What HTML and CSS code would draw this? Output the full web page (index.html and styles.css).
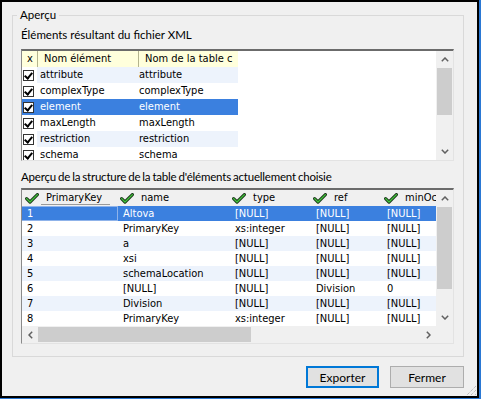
FILE: index.html
```html
<!DOCTYPE html>
<html lang="fr">
<head>
<meta charset="utf-8">
<title>Aperçu</title>
<link rel="stylesheet" href="styles.css">
</head>
<body>
<div class="win">
  <div class="group">
    <span class="group-title">Aperçu</span>
    <div class="label">Éléments résultant du fichier XML</div>
    <div class="listbox">
      <div class="lb-content">
        <div class="lb-row lb-header">
          <div class="c-x">x</div>
          <div class="c-name">Nom élément</div>
          <div class="c-table">Nom de la table c</div>
        </div>
        <div class="lb-row alt"><div class="c-x"><span class="cb"></span></div><div class="c-name">attribute</div><div class="c-table">attribute</div></div>
        <div class="lb-row"><div class="c-x"><span class="cb"></span></div><div class="c-name">complexType</div><div class="c-table">complexType</div></div>
        <div class="lb-row sel"><div class="c-x"><span class="cb"></span></div><div class="c-name">element</div><div class="c-table">element</div></div>
        <div class="lb-row"><div class="c-x"><span class="cb"></span></div><div class="c-name">maxLength</div><div class="c-table">maxLength</div></div>
        <div class="lb-row alt"><div class="c-x"><span class="cb"></span></div><div class="c-name">restriction</div><div class="c-table">restriction</div></div>
        <div class="lb-row"><div class="c-x"><span class="cb"></span></div><div class="c-name">schema</div><div class="c-table">schema</div></div>
      </div>
      <div class="vscroll lb-vscroll">
        <div class="sb-btn"><svg width="8" height="5" viewBox="0 0 8 5"><path d="M0.8 4.2 L4 1 L7.2 4.2" fill="none" stroke="#606060" stroke-width="1.5"/></svg></div>
        <div class="sb-track"><div class="sb-thumb lb-thumb"></div></div>
        <div class="sb-btn"><svg width="8" height="5" viewBox="0 0 8 5"><path d="M0.8 0.8 L4 4 L7.2 0.8" fill="none" stroke="#606060" stroke-width="1.5"/></svg></div>
      </div>
    </div>

    <div class="label label2">Aperçu de la structure de la table d'éléments actuellement choisie</div>

    <div class="grid">
      <div class="grid-main">
        <div class="grid-body">
          <div class="g-row g-header">
            <div class="g1"><svg class="ck" width="14" height="11" viewBox="0 0 14 11"><path d="M1.6 5.6 L5 9 L12.4 1.6" fill="none" stroke="#1d3a1d" stroke-width="3.2" stroke-linejoin="round" stroke-linecap="round"/><path d="M1.6 5.6 L5 9 L12.4 1.6" fill="none" stroke="#41c83a" stroke-width="1.3" stroke-linejoin="round" stroke-linecap="round"/></svg><span class="pk">PrimaryKey</span></div>
            <div class="g2"><svg class="ck" width="14" height="11" viewBox="0 0 14 11"><path d="M1.6 5.6 L5 9 L12.4 1.6" fill="none" stroke="#1d3a1d" stroke-width="3.2" stroke-linejoin="round" stroke-linecap="round"/><path d="M1.6 5.6 L5 9 L12.4 1.6" fill="none" stroke="#41c83a" stroke-width="1.3" stroke-linejoin="round" stroke-linecap="round"/></svg><span>name</span></div>
            <div class="g3"><svg class="ck" width="14" height="11" viewBox="0 0 14 11"><path d="M1.6 5.6 L5 9 L12.4 1.6" fill="none" stroke="#1d3a1d" stroke-width="3.2" stroke-linejoin="round" stroke-linecap="round"/><path d="M1.6 5.6 L5 9 L12.4 1.6" fill="none" stroke="#41c83a" stroke-width="1.3" stroke-linejoin="round" stroke-linecap="round"/></svg><span>type</span></div>
            <div class="g4"><svg class="ck" width="14" height="11" viewBox="0 0 14 11"><path d="M1.6 5.6 L5 9 L12.4 1.6" fill="none" stroke="#1d3a1d" stroke-width="3.2" stroke-linejoin="round" stroke-linecap="round"/><path d="M1.6 5.6 L5 9 L12.4 1.6" fill="none" stroke="#41c83a" stroke-width="1.3" stroke-linejoin="round" stroke-linecap="round"/></svg><span>ref</span></div>
            <div class="g5"><svg class="ck" width="14" height="11" viewBox="0 0 14 11"><path d="M1.6 5.6 L5 9 L12.4 1.6" fill="none" stroke="#1d3a1d" stroke-width="3.2" stroke-linejoin="round" stroke-linecap="round"/><path d="M1.6 5.6 L5 9 L12.4 1.6" fill="none" stroke="#41c83a" stroke-width="1.3" stroke-linejoin="round" stroke-linecap="round"/></svg><span>minOccurs</span></div>
          </div>
          <div class="g-row sel"><div class="g1 focus">1</div><div class="g2">Altova</div><div class="g3">[NULL]</div><div class="g4">[NULL]</div><div class="g5">[NULL]</div></div>
          <div class="g-row"><div class="g1">2</div><div class="g2">PrimaryKey</div><div class="g3">xs:integer</div><div class="g4">[NULL]</div><div class="g5">[NULL]</div></div>
          <div class="g-row alt"><div class="g1">3</div><div class="g2">a</div><div class="g3">[NULL]</div><div class="g4">[NULL]</div><div class="g5">[NULL]</div></div>
          <div class="g-row"><div class="g1">4</div><div class="g2">xsi</div><div class="g3">[NULL]</div><div class="g4">[NULL]</div><div class="g5">[NULL]</div></div>
          <div class="g-row alt"><div class="g1">5</div><div class="g2">schemaLocation</div><div class="g3">[NULL]</div><div class="g4">[NULL]</div><div class="g5">[NULL]</div></div>
          <div class="g-row"><div class="g1">6</div><div class="g2">[NULL]</div><div class="g3">[NULL]</div><div class="g4">Division</div><div class="g5">0</div></div>
          <div class="g-row alt"><div class="g1">7</div><div class="g2">Division</div><div class="g3">[NULL]</div><div class="g4">[NULL]</div><div class="g5">[NULL]</div></div>
          <div class="g-row"><div class="g1">8</div><div class="g2">PrimaryKey</div><div class="g3">xs:integer</div><div class="g4">[NULL]</div><div class="g5">[NULL]</div></div>
        </div>
        <div class="vscroll g-vscroll">
          <div class="sb-btn"><svg width="8" height="5" viewBox="0 0 8 5"><path d="M0.8 4.2 L4 1 L7.2 4.2" fill="none" stroke="#606060" stroke-width="1.5"/></svg></div>
          <div class="sb-track"><div class="sb-thumb g-thumb"></div></div>
          <div class="sb-btn"><svg width="8" height="5" viewBox="0 0 8 5"><path d="M0.8 0.8 L4 4 L7.2 0.8" fill="none" stroke="#606060" stroke-width="1.5"/></svg></div>
        </div>
      </div>
      <div class="hscroll-row">
        <div class="hscroll">
          <div class="hb-btn"><svg width="5" height="8" viewBox="0 0 5 8"><path d="M4.2 0.8 L1 4 L4.2 7.2" fill="none" stroke="#606060" stroke-width="1.5"/></svg></div>
          <div class="h-track"><div class="h-thumb"></div></div>
          <div class="hb-btn"><svg width="5" height="8" viewBox="0 0 5 8"><path d="M0.8 0.8 L4 4 L0.8 7.2" fill="none" stroke="#606060" stroke-width="1.5"/></svg></div>
        </div>
        <div class="corner"></div>
      </div>
    </div>
  </div>

  <div class="buttons">
    <button class="btn default">Exporter</button>
    <button class="btn">Fermer</button>
  </div>

  <svg class="grip" width="12" height="12" viewBox="0 0 12 12">
    <path d="M11 2 L2 11 M11 6 L6 11 M11 10 L10 11" stroke="#a8a8a8" stroke-width="1" stroke-dasharray="1 1" fill="none"/>
  </svg>
</div>
</body>
</html>
```

FILE: styles.css
```css
html, body {
  margin: 0;
  padding: 0;
}
body {
  background: #2a78d4;
  width: 481px;
  height: 399px;
  font-family: Lato, "Liberation Sans", sans-serif;
  font-size: 11.5px;
  color: #000;
}
.win {
  box-sizing: border-box;
  width: 479px;
  height: 398px;
  border: 2px solid #000;
  background: #f0f0f0;
  position: relative;
  padding: 13px 0 0 10px;
}
.group {
  box-sizing: border-box;
  width: 452px;
  height: 342px;
  border: 1px solid #d9d9d9;
  position: relative;
  padding: 11px 9px 0 8px;
}
.group-title {
  position: absolute;
  top: -9px;
  left: 4px;
  padding: 0 3px;
  background: #f0f0f0;
  font-family: Lato, sans-serif;
  font-size: 11.5px;
  line-height: 16px;
}
.label {
  font-family: Lato, sans-serif;
  font-size: 11.5px;
  line-height: 16px;
  height: 16px;
  white-space: nowrap;
}
.label2 {
  margin-top: 8px;
  letter-spacing: -0.2px;
  word-spacing: -0.7px;
}

/* list box */
.listbox {
  box-sizing: border-box;
  margin-top: 6px;
  width: 433px;
  height: 112px;
  border-top: 2px solid #6b6b6b;
  border-left: 1px solid #8a8a8a;
  border-right: 1px solid #e3e3e3;
  border-bottom: 1px solid #e3e3e3;
  background: #fff;
  display: flex;
  overflow: hidden;
}
.lb-content {
  flex: 1;
  overflow: hidden;
  font-family: "DejaVu Sans Condensed", "DejaVu Sans", sans-serif;
  font-size: 11px;
}
.lb-row {
  display: flex;
  height: 16px;
  line-height: 16px;
  width: 216px;
  white-space: nowrap;
}
.lb-row .c-x {
  width: 15px;
  flex: none;
  display: flex;
  align-items: center;
  background: #fff;
}
.lb-row .c-name {
  width: 100px;
  flex: none;
  padding-left: 3px;
  box-sizing: border-box;
  overflow: hidden;
}
.lb-row .c-table {
  width: 101px;
  flex: none;
  padding-left: 2px;
  box-sizing: border-box;
  overflow: hidden;
}
.lb-header {
  background: #ffffdc;
}
.lb-header .c-x {
  background: #ffffdc;
  padding-left: 5px;
  box-sizing: border-box;
}
.lb-header .c-name,
.lb-header .c-table {
  padding-left: 6px;
  border-left: 1px solid #b4b48e;
}
.lb-header .c-name { width: 101px; }
.lb-header .c-table { width: 100px; }
.lb-row.alt .c-name,
.lb-row.alt .c-table {
  background: #edf3fc;
}
.lb-row.sel,
.lb-row.sel .c-x {
  background: #3b80df;
  color: #fff;
}
.cb {
  box-sizing: border-box;
  display: block;
  width: 11px;
  height: 11px;
  margin-left: 1px;
  border: 1px solid #333;
  background: #fff;
  position: relative;
}
.cb::after {
  content: "";
  position: absolute;
  left: 2px;
  top: 0;
  width: 3px;
  height: 6px;
  border-right: 2px solid #000;
  border-bottom: 2px solid #000;
  transform: rotate(40deg);
}

/* scrollbars */
.vscroll {
  width: 17px;
  flex: none;
  background: #f0f0f0;
  display: flex;
  flex-direction: column;
}
.sb-btn {
  height: 17px;
  flex: none;
  display: flex;
  align-items: center;
  justify-content: center;
}
.sb-track {
  flex: 1;
}
.sb-thumb {
  margin: 0 1px;
  background: #cdcdcd;
}
.lb-thumb { height: 47px; }
.g-thumb { height: 82px; }

/* grid */
.grid {
  box-sizing: border-box;
  margin-top: 3px;
  width: 433px;
  height: 156px;
  border-top: 2px solid #6b6b6b;
  border-left: 1px solid #8a8a8a;
  border-right: 1px solid #e3e3e3;
  border-bottom: 1px solid #e3e3e3;
  background: #fff;
  display: flex;
  flex-direction: column;
}
.grid-main {
  display: flex;
  flex: 1;
  overflow: hidden;
}
.grid-body {
  flex: 1;
  overflow: hidden;
  font-family: "DejaVu Sans Condensed", "DejaVu Sans", sans-serif;
  font-size: 11px;
}
.g-row {
  display: flex;
  height: 15px;
  line-height: 15px;
  white-space: nowrap;
}
.g-row > div {
  flex: none;
  box-sizing: border-box;
  padding-left: 5px;
  overflow: hidden;
}
.g1 { width: 96px; }
.g2 { width: 112px; }
.g3 { width: 81px; }
.g4 { width: 71px; }
.g5 { width: 54px; }
.g-row.alt { background: #edf3fc; }
.g-row.sel { background: #3b80df; color: #fff; }
.g-row .focus {
  border: 1px solid #8fb3ea;
  border-left: none;
  line-height: 13px;
}
.g-header {
  height: 16px;
  line-height: 16px;
  background: #f0f0f0;
}
.g-header > div {
  display: flex;
  align-items: center;
  padding-left: 2px;
}
.g-header .g1 { padding-left: 3px; }
.g-header .ck {
  flex: none;
  margin-right: 7px;
}
.g-header .pk {
  border-bottom: 1px solid #9a9a9a;
  line-height: 13px;
  padding-right: 8px;
  margin-left: -5px;
  padding-left: 5px;
}
.hscroll-row {
  display: flex;
  height: 17px;
  flex: none;
  background: #f0f0f0;
}
.hscroll {
  flex: 1;
  display: flex;
}
.hb-btn {
  width: 16px;
  flex: none;
  display: flex;
  align-items: center;
  justify-content: center;
}
.h-track {
  flex: 1;
  padding: 1px 0;
}
.h-thumb {
  width: 213px;
  height: 15px;
  background: #cdcdcd;
}
.corner {
  width: 17px;
  flex: none;
}

/* buttons */
.buttons {
  display: flex;
  justify-content: flex-end;
  gap: 11px;
  margin-top: 9px;
  margin-right: 13px;
}
.btn {
  box-sizing: border-box;
  height: 22px;
  width: 74px;
  background: #e1e1e1;
  border: 1px solid #adadad;
  font-family: Lato, sans-serif;
  font-size: 12px;
  padding: 0;
  color: #000;
}
.btn.default {
  width: 73px;
  border: 2px solid #0078d7;
}
.grip {
  position: absolute;
  right: 0;
  bottom: 0;
}
```
